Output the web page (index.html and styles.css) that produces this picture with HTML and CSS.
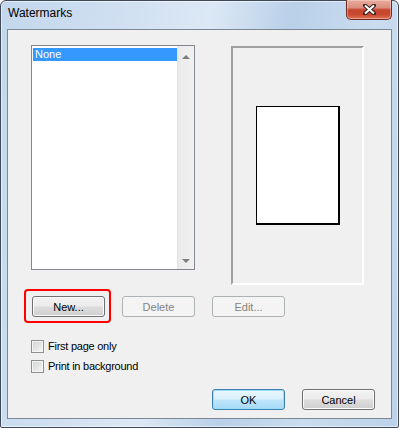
FILE: index.html
```html
<!doctype html>
<html>
<head>
	<meta charset='utf-8'>
	<title>Watermarks</title>
	<link rel="stylesheet" href="styles.css">
</head>
<body>
<div class='window'>
	<div class='titlebar'>
		<span class='title'>Watermarks</span>
		<button class='close-btn'>
			<svg width='13' height='11' viewBox='0 0 13 11'>
				<path d='M2 1.5L11 9.5M11 1.5L2 9.5' stroke='#3a2420' stroke-width='4' stroke-linecap='square'/>
				<path d='M2 1.5L11 9.5M11 1.5L2 9.5' stroke='#fff' stroke-width='2'/>
			</svg>
		</button>
	</div>
	<div class='client'>
		<div class='top-row'>
			<div class='listbox'>
				<ul class='list-items'>
					<li class='list-item selected'>None</li>
				</ul>
				<div class='scrollbar'><span class='arrow up'></span><span class='arrow down'></span></div>
			</div>
			<div class='preview'><div class='page'></div></div>
		</div>
		<div class='button-row'>
			<span class='highlight'><button class='btn'>New...</button></span>
			<button class='btn btn-delete' disabled>Delete</button>
			<button class='btn btn-edit' disabled>Edit...</button>
		</div>
		<div class='options'>
			<label class='check'><span class='box'></span>First page only</label>
			<label class='check'><span class='box'></span>Print in background</label>
		</div>
		<div class='footer'>
			<button class='btn btn-default'>OK</button>
			<button class='btn btn-cancel'>Cancel</button>
		</div>
	</div>
</div>
</body>
</html>
```

FILE: styles.css
```css
*{margin:0;padding:0;box-sizing:border-box;}
body{font-family:"Liberation Sans",Arial,sans-serif;font-size:11px;color:#000;background:#fff;}

/* window frame */
.window{width:399px;height:428px;display:flex;flex-direction:column;padding:0 6px 8px 6px;border:1px solid #3e4a59;border-radius:6px 6px 2px 2px;
  background:linear-gradient(100deg,#c3d7ec 0%,#cfdff1 25%,#dce8f5 45%,#b9d0e9 62%,#cadcef 80%,#bcd2ea 100%);
  box-shadow:inset 0 0 0 1px rgba(255,255,255,.55);}
.titlebar{height:28px;display:flex;justify-content:space-between;align-items:flex-start;flex-shrink:0;}
.title{margin:5px 0 0 1px;font-size:12px;line-height:15px;color:#000;}
.close-btn{margin-top:-1px;width:46px;height:20px;border:1px solid #6b2c24;border-top:none;border-radius:0 0 5px 5px;display:flex;align-items:center;justify-content:center;
  background:linear-gradient(#e9ada0 0%,#dc8f7e 40%,#c6452d 52%,#c94a31 78%,#de7656 100%);box-shadow:inset 0 0 0 1px rgba(255,220,210,.45);}

.client{flex:1;background:#f0f0f0;border:1px solid #7d8896;padding-top:15px;}

/* list + preview */
.top-row{display:flex;align-items:flex-start;padding-left:23px;}
.listbox{width:164px;height:225px;border:1px solid #828790;background:#fff;display:flex;}
.list-items{list-style:none;flex:1;padding:2px 0 0 1px;}
.list-item{height:13px;line-height:13px;padding-left:2px;}
.list-item.selected{background:#3399ff;color:#fff;}
.scrollbar{width:17px;display:flex;flex-direction:column;justify-content:space-between;align-items:center;padding:9px 0 6px;
  background:linear-gradient(to right,#e2e2e2 0,#ebebeb 2px,#f1f1f1 100%);}
.arrow{width:0;height:0;border-left:4px solid transparent;border-right:4px solid transparent;}
.arrow.up{border-bottom:4px solid #7d7d7d;}
.arrow.down{border-top:4px solid #7d7d7d;}

.preview{margin:1px 0 0 36px;width:133px;height:239px;border:2px solid;border-color:#a0a0a0 #fff #fff #a0a0a0;display:flex;align-items:center;justify-content:center;}
.page{width:84px;height:119px;background:#fff;border:solid #000;border-width:1px 2px 2px 1px;}

/* buttons */
.button-row{display:flex;align-items:flex-start;padding-left:16px;margin-top:4px;}
.highlight{display:flex;border:2px solid #ff0000;border-radius:4px;padding:5px 4px 4px 6px;}
.btn{width:73px;height:21px;font-family:inherit;font-size:11px;color:#000;border:1px solid #707070;border-radius:3px;
  background:linear-gradient(#f2f2f2 0%,#ebebeb 48%,#dddddd 52%,#cfcfcf 100%);box-shadow:inset 0 0 0 1px #fbfbfb;}
.btn:disabled{border-color:#adb2b5;background:#f4f4f4;color:#838383;box-shadow:none;}
.btn-delete{margin:7px 0 0 11px;}
.btn-edit{margin:7px 0 0 17px;}
.btn-default{border-color:#3c7fb1;background:linear-gradient(#eaf6fd 0%,#d9f0fc 48%,#bee6fd 52%,#a7d9f5 100%);box-shadow:inset 0 0 0 1px #9bdcf8;}
.btn-cancel{margin-left:17px;}

/* checkboxes */
.options{padding-left:23px;margin-top:13px;}
.check{display:flex;align-items:center;height:20px;letter-spacing:-.25px;}
.box{width:13px;height:13px;margin-right:4px;border:1px solid #8e8f8f;background:linear-gradient(135deg,#d0d2d5,#f6f6f6);box-shadow:inset 0 0 0 1px #f4f4f4;}

.footer{display:flex;justify-content:flex-end;padding-right:16px;margin-top:13px;}
```
